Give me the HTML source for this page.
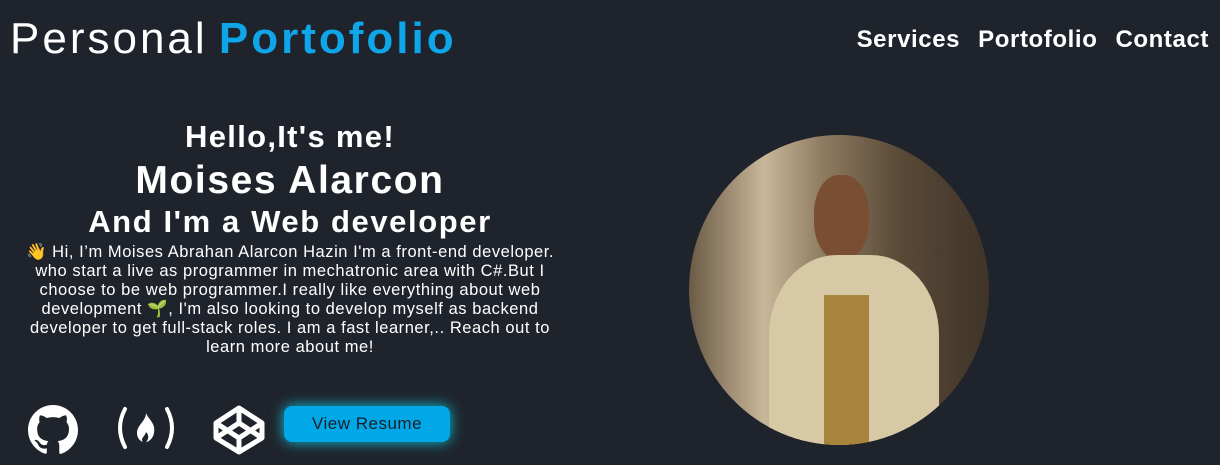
<!DOCTYPE html>
<html><head><meta charset="utf-8"><style>
*{margin:0;padding:0;box-sizing:border-box}
body{width:1220px;height:465px;background:#1f232b;font-family:"Liberation Sans",sans-serif;color:#fff;position:relative;overflow:hidden}
.logo{position:absolute;left:10px;top:14px;font-size:44px;letter-spacing:3px;word-spacing:-4px}
.logo b{color:#0ea5e9}
nav{position:absolute;right:11px;top:26px;font-size:24px;font-weight:bold;letter-spacing:0.6px}
nav span{margin-left:18px}
.h{position:absolute;left:0;width:580px;text-align:center;font-weight:bold}
p{position:absolute;left:10px;width:560px;top:243px;text-align:center;font-size:16.5px;line-height:19px;letter-spacing:0.55px}
.photo{position:absolute;left:689px;top:135px;width:300px;height:310px;border-radius:50%;overflow:hidden;background:linear-gradient(90deg,#6b5a45 0%,#c9b79a 25%,#8d7a60 45%,#5a4a38 70%,#3f3428 100%)}
.btn{position:absolute;left:284px;top:406px;width:166px;height:36px;border-radius:8px;background:#00a8e8;color:#1a1f27;font-size:17px;text-align:center;line-height:36px;box-shadow:0 0 14px #0fc4d8;letter-spacing:0.5px}
</style></head><body>
<div class="logo">Personal <b>Portofolio</b></div>
<nav><span>Services</span><span>Portofolio</span><span>Contact</span></nav>
<div class="h" style="top:119px;font-size:31px;letter-spacing:1.3px">Hello,It's me!</div>
<div class="h" style="top:159px;font-size:39px;letter-spacing:1.6px">Moises Alarcon</div>
<div class="h" style="top:204px;font-size:31px;letter-spacing:1.6px">And I'm a Web developer</div>
<p>👋 Hi, I’m Moises Abrahan Alarcon Hazin I'm a front-end developer.<br>who start a live as programmer in mechatronic area with C#.But I<br>choose to be web programmer.I really like everything about web<br>development 🌱, I'm also looking to develop myself as backend<br>developer to get full-stack roles. I am a fast learner,.. Reach out to<br>learn more about me!</p>
<div class="photo">
<div style="position:absolute;left:125px;top:40px;width:55px;height:85px;border-radius:45%;background:#7a4e33"></div>
<div style="position:absolute;left:80px;top:120px;width:170px;height:200px;border-radius:40% 40% 0 0;background:#d8c9a6"></div>
<div style="position:absolute;left:135px;top:160px;width:45px;height:150px;background:#a8843d"></div>
</div>
<svg style="position:absolute;left:28px;top:405px" width="50" height="50" viewBox="0 0 16 16"><path fill="#fff" d="M8 0C3.58 0 0 3.58 0 8c0 3.54 2.29 6.53 5.47 7.59.4.07.55-.17.55-.38v-1.34c-2.23.48-2.7-1.07-2.7-1.07-.36-.93-.89-1.17-.89-1.17-.73-.5.06-.49.06-.49.8.06 1.23.82 1.23.82.72 1.22 1.87.87 2.33.67.07-.52.28-.87.51-1.07-1.78-.2-3.64-.89-3.64-3.95 0-.87.31-1.59.82-2.15-.08-.2-.36-1.02.08-2.12 0 0 .67-.21 2.2.82a7.6 7.6 0 014 0c1.53-1.04 2.2-.82 2.2-.82.44 1.1.16 1.92.08 2.12.51.56.82 1.27.82 2.15 0 3.07-1.87 3.75-3.65 3.95.29.25.54.73.54 1.48v2.2c0 .21.15.46.55.38A8 8 0 0016 8c0-4.42-3.58-8-8-8z"/></svg>
<svg style="position:absolute;left:115px;top:405px" width="62" height="46" viewBox="0 0 62 46"><path d="M10 4Q0 23 10 42M52 4Q62 23 52 42" stroke="#fff" stroke-width="4" fill="none" stroke-linecap="round"/><path fill="#fff" d="M31 8c2 6 10 10 8 20-1 6-6 9-8 9 3-3 3-7 0-10-1 4-4 5-4 8 0 1 1 2 1 2-3-1-6-4-6-9 0-8 9-12 9-20z"/></svg>
<svg style="position:absolute;left:213px;top:405px" width="52" height="50" viewBox="0 0 52 50"><g fill="none" stroke="#fff" stroke-width="5" stroke-linejoin="round"><path d="M26 3L49 18V33L26 47L3 33V18Z"/><path d="M3 18L26 33L49 18M3 33L26 18L49 33M26 3V18M26 33V47"/></g></svg>
<div class="btn">View Resume</div>
</body></html>
